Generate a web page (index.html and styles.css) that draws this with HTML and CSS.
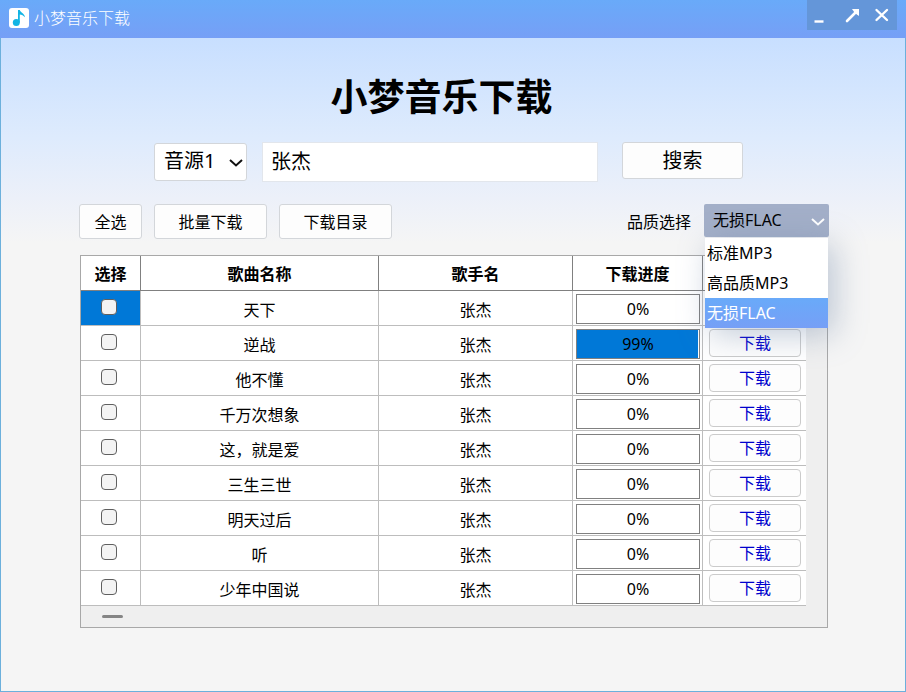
FILE: index.html
```html
<!DOCTYPE html>
<html lang="zh-CN">
<head>
<meta charset="utf-8">
<meta name="viewport" content="width=device-width, initial-scale=1">
<title>小梦音乐下载</title>
<link rel="stylesheet" href="styles.css">
</head>
<body>
<div class="window">
  <header class="titlebar">
    <svg class="logo" width="20" height="20" viewBox="0 0 20 20" aria-hidden="true">
      <rect width="20" height="20" rx="3" fill="#fff"/>
      <ellipse cx="7.300" cy="14.400" rx="3.500" ry="3.500" fill="#12b4e4"/>
      <path d="M9 2h1.800c.3 2.300 4.700 3 5.200 7.300-1.500-1.800-3.300-2.700-5.200-2.900v8H9z" fill="#12b4e4"/>
    </svg>
    <span class="app-name">小梦音乐下载</span>
    <div class="window-controls">
      <button type="button" aria-label="最小化"><svg width="30" height="30" viewBox="0 0 30 30"><path d="M7.500 21.500h9" stroke="#fff" stroke-width="2.400"/></svg></button>
      <button type="button" aria-label="最大化"><svg width="30" height="30" viewBox="0 0 30 30"><path d="M10 21 19 12" stroke="#fff" stroke-width="2.600" stroke-linecap="round"/><path d="M15 9h7v7l-2.400-1.800-2.800-2.800z" fill="#fff"/></svg></button>
      <button type="button" aria-label="关闭"><svg width="30" height="30" viewBox="0 0 30 30"><path d="m9.500 10 10.500 10m0-10L9.500 20" stroke="#fff" stroke-width="2.400" stroke-linecap="round"/></svg></button>
    </div>
  </header>

  <main class="content">
    <section class="search">
      <h1>小梦音乐下载</h1>
      <form class="search-row">
        <div class="picker source">
          <select aria-label="音源"><option>音源1</option></select>
          <svg class="chevron" width="14" height="8" viewBox="0 0 14 8" aria-hidden="true"><path d="m1 1 6 5.500L13 1"/></svg>
        </div>
        <input class="keyword" type="text" value="张杰" aria-label="关键词">
        <button class="button submit" type="button">搜索</button>
      </form>
    </section>

    <div class="toolbar">
      <button class="button small" type="button">全选</button>
      <button class="button wide" type="button">批量下载</button>
      <button class="button wide" type="button">下载目录</button>
      <label class="quality-label" for="quality">品质选择</label>
      <div class="picker quality">
        <select id="quality"><option>标准MP3</option><option>高品质MP3</option><option selected>无损FLAC</option></select>
        <svg class="chevron" width="14" height="8" viewBox="0 0 14 8" aria-hidden="true"><path d="m1 1 6 5.500L13 1"/></svg>
        <ul class="menu" role="listbox" aria-label="品质">
          <li role="option">标准MP3</li>
          <li role="option">高品质MP3</li>
          <li role="option" class="active" aria-selected="true">无损FLAC</li>
        </ul>
      </div>
    </div>

    <div class="panel">
      <table>
        <colgroup><col class="c-pick"><col><col class="c-singer"><col class="c-progress"><col class="c-action"></colgroup>
        <thead><tr><th>选择</th><th>歌曲名称</th><th>歌手名</th><th>下载进度</th><th></th></tr></thead>
        <tbody>
          <tr><td class="pick current"><input type="checkbox" aria-label="选择 天下"></td><td>天下</td><td>张杰</td><td class="cell"><div class="progress">0%</div></td><td class="cell"><button class="download" type="button" aria-label="下载"></button></td></tr>
          <tr><td class="pick"><input type="checkbox" aria-label="选择 逆战"></td><td>逆战</td><td>张杰</td><td class="cell"><div class="progress"><span class="bar" style="width:99%"></span><span class="value">99%</span></div></td><td class="cell"><button class="download" type="button">下载</button></td></tr>
          <tr><td class="pick"><input type="checkbox" aria-label="选择 他不懂"></td><td>他不懂</td><td>张杰</td><td class="cell"><div class="progress">0%</div></td><td class="cell"><button class="download" type="button">下载</button></td></tr>
          <tr><td class="pick"><input type="checkbox" aria-label="选择 千万次想象"></td><td>千万次想象</td><td>张杰</td><td class="cell"><div class="progress">0%</div></td><td class="cell"><button class="download" type="button">下载</button></td></tr>
          <tr><td class="pick"><input type="checkbox" aria-label="选择 这，就是爱"></td><td>这，就是爱</td><td>张杰</td><td class="cell"><div class="progress">0%</div></td><td class="cell"><button class="download" type="button">下载</button></td></tr>
          <tr><td class="pick"><input type="checkbox" aria-label="选择 三生三世"></td><td>三生三世</td><td>张杰</td><td class="cell"><div class="progress">0%</div></td><td class="cell"><button class="download" type="button">下载</button></td></tr>
          <tr><td class="pick"><input type="checkbox" aria-label="选择 明天过后"></td><td>明天过后</td><td>张杰</td><td class="cell"><div class="progress">0%</div></td><td class="cell"><button class="download" type="button">下载</button></td></tr>
          <tr><td class="pick"><input type="checkbox" aria-label="选择 听"></td><td>听</td><td>张杰</td><td class="cell"><div class="progress">0%</div></td><td class="cell"><button class="download" type="button">下载</button></td></tr>
          <tr><td class="pick"><input type="checkbox" aria-label="选择 少年中国说"></td><td>少年中国说</td><td>张杰</td><td class="cell"><div class="progress">0%</div></td><td class="cell"><button class="download" type="button">下载</button></td></tr>
        </tbody>
      </table>
      <div class="scrollbar"><div class="thumb"></div></div>
    </div>
  </main>
</div>
</body>
</html>
```
FILE: styles.css
```css
* { box-sizing: border-box; }

body {
  margin: 0;
  font: 16px/20px "Noto Sans", "Noto Sans CJK SC", sans-serif;
  color: #000;
}

button, input, select { font: inherit; color: inherit; }

.window {
  display: flex;
  flex-direction: column;
  min-height: 100vh;
}

.titlebar {
  display: flex;
  align-items: flex-start;
  height: 38px;
  padding: 0 9px;
  background: linear-gradient(#69aaf9, #769ff6);
  color: #fff;
}

.logo { margin-top: 8px; }

.app-name {
  margin: 8px auto 0 5px;
  font-weight: 300;
}

.window-controls {
  display: flex;
  background: #6496d9;
}

.window-controls button {
  width: 30px;
  height: 30px;
  padding: 0;
  border: 0;
  background: none;
}

.window-controls svg { display: block; fill: none; }

.content {
  flex: 1;
  padding: 35px 76px 20px 78px;
  border: 1px solid #6cb0dc;
  border-top: 0;
  background: linear-gradient(#c8dfff, #deebfd 100px, #ecf0f9 160px, #f5f5f5 205px);
}

.search { padding: 0 86px 0 75px; }

h1 {
  margin: 0;
  padding-right: 14px;
  font-size: 37px;
  line-height: 48px;
  text-align: center;
}

.search-row {
  display: flex;
  align-items: flex-start;
  margin-top: 21px;
  font-size: 20px;
}

.picker {
  position: relative;
  display: flex;
}

.picker select {
  width: 100%;
  height: 100%;
  border: 1px solid #d3d6da;
  border-radius: 3px;
  background: #fff;
  appearance: none;
}

.chevron {
  position: absolute;
  top: 50%;
  right: 4px;
  margin-top: -3px;
  fill: none;
  stroke: #111;
  stroke-width: 2;
  pointer-events: none;
}

.source {
  width: 93px;
  height: 38px;
  margin-top: 1px;
}

.source select { padding: 0 0 2px 9px; }

.keyword {
  flex: 1;
  min-width: 0;
  height: 40px;
  margin: 0 24px 0 15px;
  padding: 0 8px 4px;
  border: 1px solid #e2e6ec;
  background: #fff;
}

.button {
  padding: 0;
  border: 1px solid #d3d6da;
  border-radius: 3px;
  background: #fdfdfd;
}

.submit {
  width: 121px;
  height: 37px;
}

.toolbar {
  display: flex;
  align-items: flex-start;
  margin-top: 22px;
}

.toolbar .button {
  height: 35px;
  margin-right: 12px;
}

.small { width: 63px; }
.wide { width: 113px; }

.quality-label {
  margin: 8px 13px 0 auto;
}

.quality {
  width: 125px;
  height: 33px;
}

.quality select {
  padding: 0 0 2px 9px;
  border: 0;
  border-radius: 2px;
  background: #a3afc8;
}

.quality .chevron { stroke: #fff; }

.menu {
  position: absolute;
  z-index: 2;
  top: 34px;
  left: 1px;
  right: 1px;
  margin: 0;
  padding: 0;
  list-style: none;
  background: #fff;
  box-shadow: 6px 6px 32px rgba(100, 125, 160, 0.4);
}

.menu li {
  padding: 0 2px;
  line-height: 30px;
}

.menu .active {
  background: linear-gradient(#69aaf9, #769ff6);
  color: #fff;
}

.panel {
  margin: 16px 1px 0;
  border: 1px solid #a8a8a8;
  background: #efefef;
}

table {
  width: calc(100% - 21px);
  table-layout: fixed;
  border-spacing: 0;
  background: #fff;
  text-align: center;
}

.c-pick { width: 60px; }
.c-singer { width: 194px; }
.c-progress { width: 130px; }
.c-action { width: 103px; }

th, td {
  height: 35px;
  padding: 3px 0 0;
  border-right: 1px solid #bdbdbd;
  border-bottom: 1px solid #bdbdbd;
}

th {
  padding-top: 1px;
  border-color: #808080;
}

th:last-child, td:last-child { border-right: 0; }

.pick {
  padding: 0 4px 2px 0;
  line-height: 16px;
}

.pick input {
  display: block;
  width: 16px;
  height: 16px;
  margin: 0 auto;
  border: 1px solid #5f5f5f;
  border-radius: 4px;
  background: #f3f3f3;
  appearance: none;
}

.current { background: #0078d7; }

.cell { padding: 2px 2px 0 3px; }

.progress {
  position: relative;
  height: 30px;
  border: 1px solid #808080;
  line-height: 28px;
}

.bar {
  position: absolute;
  top: 0;
  bottom: 0;
  left: 0;
  background: #0078d7;
}

.value { position: relative; }

.download {
  display: block;
  width: calc(100% - 6px);
  height: 28px;
  margin: 0 3px 2px;
  padding: 0;
  border: 1px solid #cbcbcb;
  border-radius: 4px;
  background: #fdfdfd;
  color: #0000cd;
}

.scrollbar {
  height: 21px;
  padding: 9px 21px;
}

.thumb {
  width: 21px;
  height: 3px;
  border-radius: 2px;
  background: #858585;
}
```
